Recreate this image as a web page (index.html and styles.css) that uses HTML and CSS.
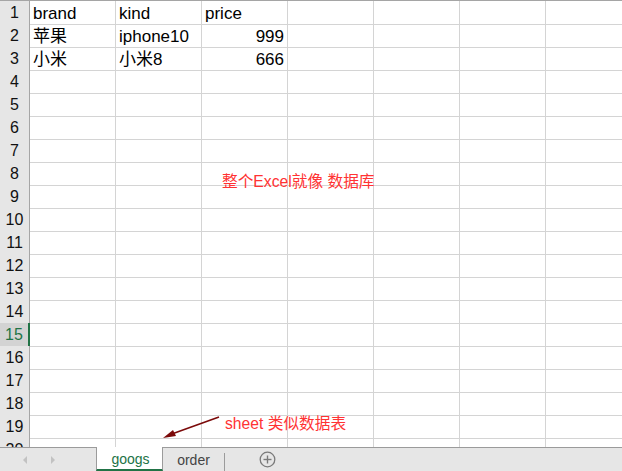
FILE: index.html
```html
<!DOCTYPE html>
<html>
<head>
<meta charset="utf-8">
<link rel="stylesheet" href="styles.css">
</head>
<body>
<div class="app">
  <div class="sheet">
    <div class="row"><div class="rh">1</div><div class="c">brand</div><div class="c">kind</div><div class="c">price</div><div class="c"></div><div class="c"></div><div class="c"></div><div class="c"></div></div>
    <div class="row"><div class="rh">2</div><div class="c">苹果</div><div class="c">iphone10</div><div class="c num">999</div><div class="c"></div><div class="c"></div><div class="c"></div><div class="c"></div></div>
    <div class="row"><div class="rh">3</div><div class="c">小米</div><div class="c">小米8</div><div class="c num">666</div><div class="c"></div><div class="c"></div><div class="c"></div><div class="c"></div></div>
    <div class="row"><div class="rh">4</div><div class="c"></div><div class="c"></div><div class="c"></div><div class="c"></div><div class="c"></div><div class="c"></div><div class="c"></div></div>
    <div class="row"><div class="rh">5</div><div class="c"></div><div class="c"></div><div class="c"></div><div class="c"></div><div class="c"></div><div class="c"></div><div class="c"></div></div>
    <div class="row"><div class="rh">6</div><div class="c"></div><div class="c"></div><div class="c"></div><div class="c"></div><div class="c"></div><div class="c"></div><div class="c"></div></div>
    <div class="row"><div class="rh">7</div><div class="c"></div><div class="c"></div><div class="c"></div><div class="c"></div><div class="c"></div><div class="c"></div><div class="c"></div></div>
    <div class="row"><div class="rh">8</div><div class="c"></div><div class="c"></div><div class="c"></div><div class="c"></div><div class="c"></div><div class="c"></div><div class="c"></div></div>
    <div class="row"><div class="rh">9</div><div class="c"></div><div class="c"></div><div class="c"></div><div class="c"></div><div class="c"></div><div class="c"></div><div class="c"></div></div>
    <div class="row"><div class="rh">10</div><div class="c"></div><div class="c"></div><div class="c"></div><div class="c"></div><div class="c"></div><div class="c"></div><div class="c"></div></div>
    <div class="row"><div class="rh">11</div><div class="c"></div><div class="c"></div><div class="c"></div><div class="c"></div><div class="c"></div><div class="c"></div><div class="c"></div></div>
    <div class="row"><div class="rh">12</div><div class="c"></div><div class="c"></div><div class="c"></div><div class="c"></div><div class="c"></div><div class="c"></div><div class="c"></div></div>
    <div class="row"><div class="rh">13</div><div class="c"></div><div class="c"></div><div class="c"></div><div class="c"></div><div class="c"></div><div class="c"></div><div class="c"></div></div>
    <div class="row"><div class="rh">14</div><div class="c"></div><div class="c"></div><div class="c"></div><div class="c"></div><div class="c"></div><div class="c"></div><div class="c"></div></div>
    <div class="row"><div class="rh sel">15</div><div class="c"></div><div class="c"></div><div class="c"></div><div class="c"></div><div class="c"></div><div class="c"></div><div class="c"></div></div>
    <div class="row"><div class="rh">16</div><div class="c"></div><div class="c"></div><div class="c"></div><div class="c"></div><div class="c"></div><div class="c"></div><div class="c"></div></div>
    <div class="row"><div class="rh">17</div><div class="c"></div><div class="c"></div><div class="c"></div><div class="c"></div><div class="c"></div><div class="c"></div><div class="c"></div></div>
    <div class="row"><div class="rh">18</div><div class="c"></div><div class="c"></div><div class="c"></div><div class="c"></div><div class="c"></div><div class="c"></div><div class="c"></div></div>
    <div class="row"><div class="rh">19</div><div class="c"></div><div class="c"></div><div class="c"></div><div class="c"></div><div class="c"></div><div class="c"></div><div class="c"></div></div>
    <div class="row"><div class="rh">20</div><div class="c"></div><div class="c"></div><div class="c"></div><div class="c"></div><div class="c"></div><div class="c"></div><div class="c"></div></div>

    <div class="note note-db">整个Excel就像 数据库</div>
    <div class="note note-sheet">sheet 类似数据表</div>
    <svg class="arrow" width="70" height="40" viewBox="0 0 70 40">
      <line x1="64" y1="5" x2="14" y2="23" stroke="#7b0a0a" stroke-width="1.6"/>
      <polygon points="8,26 18,18 21,24" fill="#7b0a0a"/>
    </svg>
  </div>
  <div class="tabs">
    <div class="nav">
      <svg class="navarrow" width="8" height="10" viewBox="0 0 8 10"><polygon points="6,1 2,5 6,9" fill="#c2c2c2"/></svg>
      <svg class="navarrow" width="8" height="10" viewBox="0 0 8 10"><polygon points="2,1 6,5 2,9" fill="#c2c2c2"/></svg>
    </div>
    <div class="tab active">googs</div>
    <div class="tab">order</div>
    <div class="divider"></div>
    <div class="add">
      <svg width="17" height="17" viewBox="0 0 17 17">
        <circle cx="8.5" cy="8.5" r="7.3" fill="none" stroke="#7a7a7a" stroke-width="1.3"/>
        <line x1="8.5" y1="4.5" x2="8.5" y2="12.5" stroke="#7a7a7a" stroke-width="1.4"/>
        <line x1="4.5" y1="8.5" x2="12.5" y2="8.5" stroke="#7a7a7a" stroke-width="1.4"/>
      </svg>
    </div>
  </div>
</div>
</body>
</html>
```

FILE: styles.css
```css
* { box-sizing: border-box; }
html, body { margin: 0; padding: 0; background: #fff; }
.app {
  width: 622px;
  height: 471px;
  display: flex;
  flex-direction: column;
  overflow: hidden;
  font-family: "Liberation Sans", "Noto Sans CJK SC", sans-serif;
}
.sheet {
  position: relative;
  flex: 1;
  overflow: hidden;
  border-top: 1px solid #a5a5a5;
}
.row {
  display: grid;
  grid-template-columns: 30px repeat(7, 86px);
  height: 23px;
}
.rh {
  background: #e6e6e6;
  border-right: 1px solid #a6a6a6;
  border-bottom: 1px solid #c9c9c9;
  text-align: center;
  font-size: 16px;
  line-height: 22px;
  padding-top: 1px;
  color: #111;
}
.rh.sel {
  background: #d3d3d3;
  color: #217346;
  border-right: 2px solid #217346;
}
.c {
  border-right: 1px solid #d4d4d4;
  border-bottom: 1px solid #d4d4d4;
  font-size: 17px;
  line-height: 19px;
  padding: 3px 3px 0 3px;
  color: #000;
  white-space: nowrap;
  overflow: hidden;
}
.c.num { text-align: right; }
.note {
  position: absolute;
  color: #ff3333;
  font-size: 15.7px;
  line-height: 18px;
  white-space: nowrap;
}
.note-db { left: 222px; top: 172px; }
.note-sheet { left: 225px; top: 414px; }
.arrow { position: absolute; left: 155px; top: 411px; }
.tabs {
  height: 24px;
  flex: none;
  background: #e6e6e6;
  border-top: 1px solid #9b9b9b;
  display: flex;
  align-items: stretch;
  font-size: 14px;
}
.nav {
  width: 96px;
  display: flex;
  align-items: center;
  padding-left: 21px;
  gap: 20px;
}
.tab {
  width: 61px;
  display: flex;
  align-items: center;
  justify-content: center;
  color: #444;
  padding-top: 1px;
}
.tab.active {
  width: 67px;
  margin-top: -1px;
  background: #fff;
  color: #217346;
  border-left: 1px solid #9b9b9b;
  border-right: 1px solid #9b9b9b;
  border-bottom: 2px solid #217346;
  padding-left: 2px;
  padding-top: 2px;
}
.divider {
  width: 1px;
  background: #9b9b9b;
  margin-top: 5px;
}
.add {
  margin-left: 34px;
  display: flex;
  align-items: center;
}
```
